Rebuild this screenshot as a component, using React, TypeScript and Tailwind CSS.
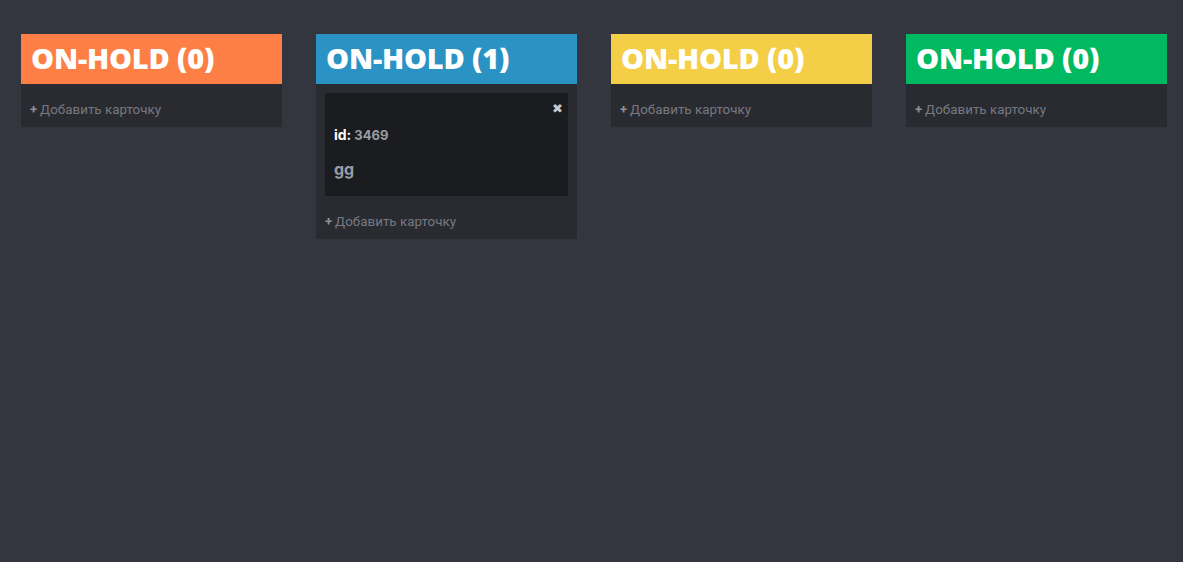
import React from "react";

const cols = [
  { title: "ON-HOLD (0)", bg: "bg-[#fe7f45]", cards: [] as { id: number; text: string }[] },
  { title: "ON-HOLD (1)", bg: "bg-[#2a93c4]", cards: [{ id: 3469, text: "gg" }] },
  { title: "ON-HOLD (0)", bg: "bg-[#f4ce46]", cards: [] },
  { title: "ON-HOLD (0)", bg: "bg-[#00b960]", cards: [] },
];

export default function App() {
  return (
    <div className="w-[1183px] h-[562px] bg-[#33363f] pt-[34px] pl-[21px] flex items-start gap-[34px] font-['Roboto',sans-serif]">
      {cols.map((c, i) => (
        <div key={i} className="w-[261px] bg-[#2a2b31]">
          <div className={`${c.bg} h-[50px] flex items-center pl-[10px] pb-[4px]`}>
            <span className="text-white text-[29px] font-extrabold tracking-[-0.2px] font-['Open_Sans',sans-serif] leading-none">
              {c.title}
            </span>
          </div>
          {c.cards.length > 0 && (
            <div className="pt-[9px] px-[9px]">
              {c.cards.map((card) => (
                <div key={card.id} className="bg-[#1b1c20] h-[103px] relative pl-[9px] pt-[31px]">
                  <span className="absolute right-[5px] top-[9px] text-[#c9cbd1] text-[13px] leading-none">✖</span>
                  <div className="flex items-baseline gap-[3px] font-['Inter',sans-serif] font-bold">
                    <span className="text-white text-[14px]">id:</span>
                    <span className="text-[#9a9ca3] text-[13px]">{card.id}</span>
                  </div>
                  <div className="mt-[11px] text-[#9a9ca3] text-[16px] font-bold font-['Inter',sans-serif]">{card.text}</div>
                </div>
              ))}
            </div>
          )}
          <div className="pt-[18px] pb-[9px] pl-[9px] h-[43px] text-[13.4px] leading-[16px] text-[#767982] flex items-start gap-[3px]">
            <span className="text-[13px] font-bold text-[#8d9098]">+</span>
            <span>Добавить карточку</span>
          </div>
        </div>
      ))}
    </div>
  );
}
